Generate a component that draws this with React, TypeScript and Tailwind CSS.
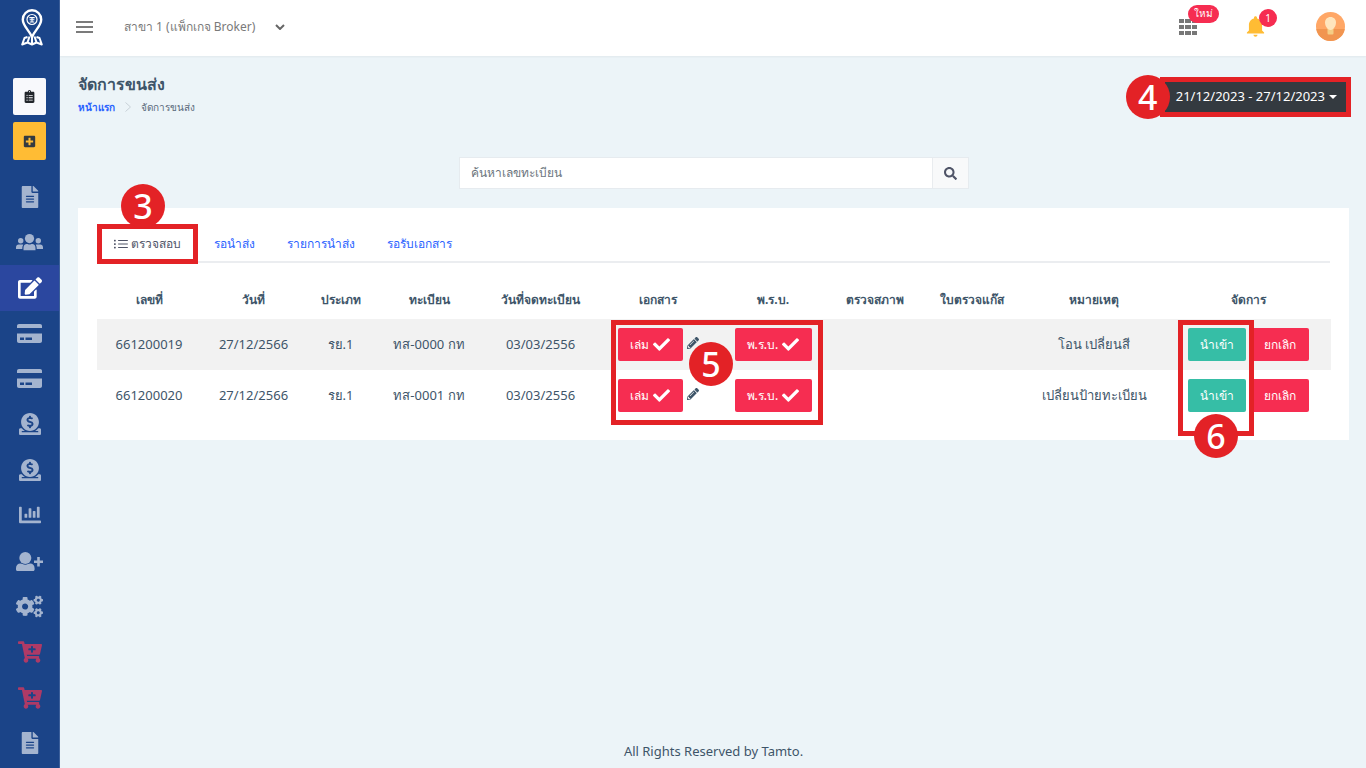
import type { ReactNode } from 'react';
import {
  FaCartPlus,
  FaChartBar,
  FaCheck,
  FaClipboardList,
  FaCogs,
  FaDonate,
  FaEdit,
  FaFileAlt,
  FaPencilAlt,
  FaPlusSquare,
  FaSearch,
} from 'react-icons/fa';
import { IoMdNotifications } from 'react-icons/io';
import { SlList } from 'react-icons/sl';

type NavItem = {
  label: string;
  icon: ReactNode;
  active?: boolean;
  accent?: boolean;
};

function UsersIcon() {
  return (
    <svg width="27" height="17" viewBox="0 0 27 17" fill="currentColor" aria-hidden="true">
      <circle cx="13.5" cy="4.6" r="4.6" />
      <circle cx="4.7" cy="6.8" r="2.7" />
      <circle cx="22.3" cy="6.8" r="2.7" />
      <path d="M7.5 16.300v-2.300c0-2.300 1.300-3.900 3.300-3.900.9 0 1.500.5 2.700.5s1.800-.5 2.700-.5c2 0 3.300 1.600 3.300 3.900v2.300z" />
      <path d="M0 15v-1.600c0-1.900 1.100-3 2.700-3h3.200c.6 0 1 .1 1.400.4-.7.900-1 2-1 3.200v1zM27 15v-1.600c0-1.900-1.100-3-2.700-3h-3.200c-.6 0-1 .1-1.400.4.7.9 1 2 1 3.200v1z" />
    </svg>
  );
}

function UserPlusIcon() {
  return (
    <svg width="27" height="19" viewBox="0 0 27 19" fill="currentColor" aria-hidden="true">
      <circle cx="9.3" cy="6" r="6" />
      <path d="M0 17.500v-1.200c0-2.900 1.900-4.800 4.400-4.800 1.500 0 2.700 1.200 4.900 1.200s3.400-1.200 4.900-1.200c2.500 0 4.400 1.900 4.400 4.800v1.200c0 .8-.6 1.500-1.500 1.500H1.500C.6 19 0 18.300 0 17.500z" />
      <path d="M21.200 5h2.600v3.500H27V11h-3.200v3.500h-2.600V11H18V8.500h3.200z" />
    </svg>
  );
}

function CardIcon() {
  return (
    <svg width="25" height="19" viewBox="0 0 25 19" fill="currentColor" fillRule="evenodd" aria-hidden="true">
      <path d="M0 4V2c0-1.200.8-2 2-2h21c1.200 0 2 .8 2 2v2z" />
      <path d="M0 9.500h25V17c0 1.200-.8 2-2 2H2c-1.200 0-2-.8-2-2zM3 13.500V16h4v-2.500zM8.500 13.500V16h6.500v-2.500z" />
    </svg>
  );
}

const navItems: NavItem[] = [
  { label: 'เอกสาร', icon: <FaFileAlt size={22} /> },
  { label: 'ลูกค้า', icon: <UsersIcon /> },
  { label: 'จัดการขนส่ง', icon: <FaEdit size={24} />, active: true },
  { label: 'ชำระเงิน', icon: <CardIcon /> },
  { label: 'บัตร', icon: <CardIcon /> },
  { label: 'รายรับ', icon: <FaDonate size={22} /> },
  { label: 'รายจ่าย', icon: <FaDonate size={22} /> },
  { label: 'รายงาน', icon: <FaChartBar size={22} /> },
  { label: 'เพิ่มผู้ใช้', icon: <UserPlusIcon /> },
  { label: 'ตั้งค่า', icon: <FaCogs size={27} /> },
  { label: 'สั่งซื้อ', icon: <FaCartPlus size={24} />, accent: true },
  { label: 'สั่งซื้อเพิ่ม', icon: <FaCartPlus size={24} />, accent: true },
  { label: 'คู่มือ', icon: <FaFileAlt size={22} /> },
];

const tabs = ['รอนำส่ง', 'รายการนำส่ง', 'รอรับเอกสาร'];

const columns = [
  { title: 'เลขที่', width: 'w-[104px]' },
  { title: 'วันที่', width: 'w-[105px]' },
  { title: 'ประเภท', width: 'w-[69px]' },
  { title: 'ทะเบียน', width: 'w-[108px]' },
  { title: 'วันที่จดทะเบียน', width: 'w-[115px]' },
  { title: 'เอกสาร', width: 'w-[120px]' },
  { title: 'พ.ร.บ.', width: 'w-[110px]' },
  { title: 'ตรวจสภาพ', width: 'w-[94px]' },
  { title: 'ใบตรวจแก๊ส', width: 'w-[100px]' },
  { title: 'หมายเหตุ', width: 'w-[144px]' },
  { title: 'จัดการ', width: 'w-[165px]' },
];

const rows = [
  { id: '661200019', date: '27/12/2566', type: 'รย.1', plate: 'ทส-0000 กท', registered: '03/03/2556', note: 'โอน เปลี่ยนสี' },
  { id: '661200020', date: '27/12/2566', type: 'รย.1', plate: 'ทส-0001 กท', registered: '03/03/2556', note: 'เปลี่ยนป้ายทะเบียน' },
];

function Marker({ children, className }: { children: ReactNode; className: string }) {
  return (
    <span
      className={`pointer-events-none absolute z-20 grid h-11 w-11 place-items-center rounded-full bg-[#e32226] text-[34px] leading-none font-medium text-white ${className}`}
    >
      {children}
    </span>
  );
}

function Frame({ className }: { className: string }) {
  return <span className={`pointer-events-none absolute z-10 border-[5px] border-[#e32226] ${className}`} />;
}

function Logo() {
  return (
    <svg width="22" height="38" viewBox="0 0 22 38" fill="none" stroke="#fff" aria-hidden="true">
      <path d="M11 28C8 21 1.8 17 1.8 10.5a9.2 9.2 0 0 1 18.4 0C20.2 17 14 21 11 28Z" strokeWidth="2.4" />
      <circle cx="11" cy="10.5" r="5" strokeWidth="1.2" />
      <path d="M8.3 8.6h5.4M8.6 10.8h4.8M8.8 13h4.4M11 8.6V13" strokeWidth="1.1" />
      <path
        d="M6.500 28 3.500 29 1.200 35.500l5.300-2 4.500 2 4.500-2 5.300 2-2.300-6.500-3-1M6.500 33.500l2-6M15.500 33.500l-2-6M11 28v7.500"
        strokeWidth="2"
        strokeLinejoin="round"
      />
    </svg>
  );
}

function Sidebar() {
  return (
    <aside className="flex min-h-screen w-[60px] shrink-0 flex-col border-r border-[#3d609b] bg-[#1b4488] pb-[2px]">
      <a href="#" aria-label="Tamto" className="flex h-14 items-center justify-center pl-1">
        <Logo />
      </a>
      <div className="mt-[22px] mb-[14px] flex flex-col items-center gap-[7px]">
        <button
          type="button"
          aria-label="รายการงาน"
          className="grid h-[37px] w-[33px] place-items-center rounded-xs bg-[#f8f9fc] text-[#22262b]"
        >
          <FaClipboardList size={13} />
        </button>
        <button
          type="button"
          aria-label="เพิ่มงาน"
          className="grid h-[38px] w-[33px] place-items-center rounded-xs bg-[#ffbc34] text-[#343a40]"
        >
          <FaPlusSquare size={13} />
        </button>
      </div>
      <nav className="flex flex-1 flex-col">
        {navItems.map((item) => (
          <a
            key={item.label}
            href="#"
            aria-label={item.label}
            className={`flex flex-1 items-center justify-center ${
              item.active ? 'bg-[#2b479f] text-white' : item.accent ? 'text-[#ae3a66]' : 'text-[#a4b4cf]'
            }`}
          >
            {item.icon}
          </a>
        ))}
      </nav>
    </aside>
  );
}

function TopBar() {
  return (
    <header className="flex h-14 items-center justify-between bg-white pr-[21px] pb-[3px] pl-4 shadow-xs">
      <div className="flex items-center gap-[31px]">
        <button type="button" aria-label="เมนู" className="text-[#7b7b7b]">
          <svg width="17" height="12" viewBox="0 0 17 12" fill="currentColor" aria-hidden="true">
            <path d="M0 0h17v2H0zM0 5h17v2H0zM0 10h17v2H0z" />
          </svg>
        </button>
        <button type="button" className="flex items-center gap-5 text-xs text-[#7a7a7a]">
          สาขา 1 (แพ็กเกจ Broker)
          <svg width="10" height="6" viewBox="0 0 10 6" fill="none" stroke="#666" strokeWidth="2" aria-hidden="true">
            <path d="m1 1 4 4 4-4" />
          </svg>
        </button>
      </div>
      <div className="flex items-center">
        <button type="button" aria-label="แอปพลิเคชัน" className="relative mr-[46px] text-[#777]">
          <svg width="18" height="16" viewBox="0 0 18 16" fill="currentColor" aria-hidden="true">
            <path d="M0 0h5v4H0zM6 0h6v4H6zM13 0h5v4h-5zM0 6h5v4H0zM6 6h6v4H6zM13 6h5v4h-5zM0 12h5v4H0zM6 12h6v4H6zM13 12h5v4h-5z" />
          </svg>
          <span className="absolute -top-[14px] left-[9px] flex h-[18px] w-[31px] items-center justify-center rounded-full bg-[#f62d51] text-[10px] text-white">
            ใหม่
          </span>
        </button>
        <button type="button" aria-label="การแจ้งเตือน" className="relative mr-12 text-[#ffbc34]">
          <IoMdNotifications size={25} />
          <span className="absolute -top-[5px] left-4 flex h-[18px] w-[18px] items-center justify-center rounded-full bg-[#f62d51] text-[10px] text-white">
            1
          </span>
        </button>
        <button type="button" aria-label="บัญชีผู้ใช้">
          <svg width="29" height="29" viewBox="0 0 29 29" aria-hidden="true">
            <clipPath id="avatar">
              <circle cx="14.5" cy="14.5" r="14.5" />
            </clipPath>
            <g clipPath="url(#avatar)">
              <path d="M0 0h29v29H0z" fill="#ffa766" />
              <path d="M0 17h29v12H0z" fill="#f19550" />
              <path d="M11.500 16h6v5.500a1 1 0 0 1-1 1h-4a1 1 0 0 1-1-1z" fill="#f5cd85" />
              <path d="M14.500 5c3.300 0 5.500 2.400 5.500 5.500 0 3.500-2.500 7.500-5.500 7.500S9 14 9 10.500C9 7.400 11.200 5 14.500 5z" fill="#ffe5bd" />
            </g>
          </svg>
        </button>
      </div>
    </header>
  );
}

function PageTitle() {
  return (
    <div className="flex items-start justify-between">
      <div>
        <h1 className="h-6 text-base leading-6 font-bold text-[#3e5569]">จัดการขนส่ง</h1>
        <nav className="mt-[3px] flex items-center gap-[10px] text-[10px] leading-4">
          <a href="#" className="font-semibold text-[#2962ff]">
            หน้าแรก
          </a>
          <svg width="6" height="10" viewBox="0 0 6 10" fill="none" stroke="#c9d1d8" aria-hidden="true">
            <path d="m.5.5 5 4.500-5 4.500" />
          </svg>
          <span className="font-medium text-[#5a6a7c]">จัดการขนส่ง</span>
        </nav>
      </div>
      <div className="relative mt-[9px] mr-[2px]">
        <button
          type="button"
          className="flex h-8 items-center gap-1 bg-[#343a40] pr-[10px] pl-3 text-[13px] text-white"
        >
          21/12/2023 - 27/12/2023
          <svg width="8" height="4" viewBox="0 0 8 4" fill="currentColor" aria-hidden="true">
            <path d="M0 0h8L4 4z" />
          </svg>
        </button>
        <Frame className="-inset-1" />
        <Marker className="top-[-6px] right-full -mr-[6px]">4</Marker>
      </div>
    </div>
  );
}

function SearchBar() {
  return (
    <form className="mx-auto flex h-8 w-[510px] max-w-full border border-[#e6ebef]" onSubmit={(e) => e.preventDefault()}>
      <input
        type="search"
        aria-label="ค้นหาเลขทะเบียน"
        placeholder="ค้นหาเลขทะเบียน"
        className="min-w-0 flex-1 bg-white px-[11px] text-xs outline-none placeholder:text-[#6c757d]"
      />
      <button
        type="submit"
        aria-label="ค้นหา"
        className="grid w-9 place-items-center border-l border-[#e9ecef] bg-[#f8f9fa] text-[#4f5467]"
      >
        <FaSearch size={13} />
      </button>
    </form>
  );
}

function TransportTable() {
  return (
    <table className="mt-[18px] w-full table-fixed text-center text-[13px] text-[#3e5569]">
      <thead>
        <tr className="h-[38px]">
          {columns.map((column) => (
            <th key={column.title} className={`${column.width} text-xs font-bold whitespace-nowrap`}>
              {column.title}
            </th>
          ))}
        </tr>
      </thead>
      <tbody>
        {rows.map((row, index) => (
          <tr key={row.id} className="h-[51px] odd:bg-[#f2f2f2]">
            <td>{row.id}</td>
            <td>{row.date}</td>
            <td>{row.type}</td>
            <td>{row.plate}</td>
            <td>{row.registered}</td>
            <td>
              <div className="relative flex items-center justify-center gap-1">
                <button
                  type="button"
                  className="flex h-[33px] w-[65px] items-center justify-center gap-1 rounded-xs bg-[#f62d51] text-xs font-medium text-white"
                >
                  เล่ม
                  <FaCheck size={17} />
                </button>
                <button type="button" aria-label="แก้ไข" className="pb-1">
                  <FaPencilAlt size={12} />
                </button>
                {index === 0 ? (
                  <>
                    <Frame className="-top-2 left-[13px] h-[105px] w-[212px]" />
                    <Marker className="top-[14px] left-[91px]">5</Marker>
                  </>
                ) : null}
              </div>
            </td>
            <td>
              <button
                type="button"
                className="mx-auto flex h-[33px] w-[77px] items-center justify-center gap-1 rounded-xs bg-[#f62d51] text-xs font-medium text-white"
              >
                พ.ร.บ.
                <FaCheck size={17} />
              </button>
            </td>
            <td />
            <td />
            <td className="whitespace-nowrap">{row.note}</td>
            <td>
              <div className="flex items-center justify-center gap-1">
                <div className="relative">
                  <button type="button" className="h-[33px] w-[58px] rounded-xs bg-[#36bea6] text-xs font-medium text-white">
                    นำเข้า
                  </button>
                  {index === 0 ? (
                    <>
                      <Frame className="-top-2 left-[-10px] h-[116px] w-[76px]" />
                      <Marker className="top-[86px] left-[6px]">6</Marker>
                    </>
                  ) : null}
                </div>
                <button type="button" className="h-[33px] w-[59px] rounded-xs bg-[#f62d51] text-xs font-medium text-white">
                  ยกเลิก
                </button>
              </div>
            </td>
          </tr>
        ))}
      </tbody>
    </table>
  );
}

export default function App() {
  return (
    <div className="flex min-h-screen bg-[#ecf4f8] font-['Noto_Sans',sans-serif] text-[#3e5569]">
      <Sidebar />
      <div className="flex min-w-0 flex-1 flex-col">
        <TopBar />
        <main className="flex flex-1 flex-col pt-4 pr-[17px] pl-[18px]">
          <PageTitle />
          <div className="mt-[42px]">
            <SearchBar />
          </div>
          <section className="mt-[19px] bg-white px-[19px] pt-4 pb-[19px]">
            <div className="flex h-[39px] items-stretch border-b-2 border-[#ebedf0] text-xs" role="tablist">
              <div className="relative flex w-[101px]">
                <button
                  type="button"
                  role="tab"
                  aria-selected="true"
                  className="flex flex-1 items-center justify-center gap-[3px] pt-[2px] text-[#4f5467]"
                >
                  <SlList size={14} />
                  ตรวจสอบ
                </button>
                <Frame className="inset-x-0 top-0 h-10" />
                <Marker className="top-[-40px] left-6">3</Marker>
              </div>
              {tabs.map((tab) => (
                <button
                  key={tab}
                  type="button"
                  role="tab"
                  aria-selected="false"
                  className="px-4 pt-[2px] font-medium text-[#2962ff]"
                >
                  {tab}
                </button>
              ))}
            </div>
            <TransportTable />
          </section>
          <footer className="mt-auto pb-2 text-center text-[13px] leading-[18px]">All Rights Reserved by Tamto.</footer>
        </main>
      </div>
    </div>
  );
}
